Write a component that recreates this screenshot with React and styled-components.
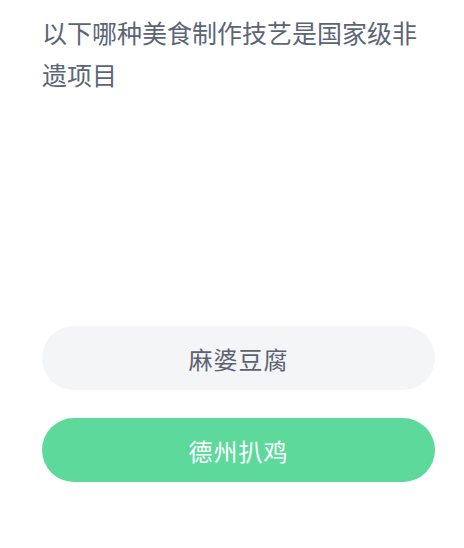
import React from 'react';
import styled, { createGlobalStyle } from 'styled-components';

const GlobalStyle = createGlobalStyle`
  html, body {
    margin: 0;
    padding: 0;
    background: #ffffff;
  }
  body {
    font-family: "Noto Sans CJK SC", "Noto Sans", sans-serif;
  }
`;

const Page = styled.div`
  display: flex;
  flex-direction: column;
  padding: 11px 29px 0 42px;
  width: 464px;
  box-sizing: border-box;
`;

const Question = styled.div`
  font-size: 25px;
  line-height: 42px;
  color: #5b6576;
  font-weight: 400;
`;

const Options = styled.div`
  display: flex;
  flex-direction: column;
  gap: 28px;
  margin-top: 231px;
`;

const Option = styled.button`
  display: flex;
  align-items: center;
  justify-content: center;
  height: 64px;
  border: none;
  border-radius: 32px;
  font-family: inherit;
  font-size: 24px;
  letter-spacing: 1px;
  cursor: pointer;
  background: ${(p) => (p.$correct ? '#5cd99b' : '#f4f5f7')};
  color: ${(p) => (p.$correct ? '#ffffff' : '#5b6272')};
`;

const options = [
  { id: 1, text: '麻婆豆腐' },
  { id: 2, text: '德州扒鸡', correct: true },
];

export default function App() {
  return (
    <>
      <GlobalStyle />
      <Page>
        <Question>以下哪种美食制作技艺是国家级非遗项目</Question>
        <Options>
          {options.map((o) => (
            <Option key={o.id} $correct={o.correct}>
              {o.text}
            </Option>
          ))}
        </Options>
      </Page>
    </>
  );
}
